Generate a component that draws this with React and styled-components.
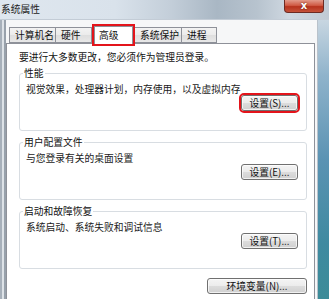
import React from "react";
import styled, { createGlobalStyle } from "styled-components";

const GlobalStyle = createGlobalStyle`
  html, body {
    margin: 0;
    padding: 0;
    background: #ffffff;
  }
  body {
    font-family: "Noto Sans CJK SC", "Noto Sans", sans-serif;
  }
`;

const tabs = [
  { label: "计算机名", width: 47 },
  { label: "硬件", width: 36 },
  { label: "高级", width: 39, active: true },
  { label: "系统保护", width: 47 },
  { label: "进程", width: 35 },
];

const groups = [
  { title: "性能", text: "视觉效果，处理器计划，内存使用，以及虚拟内存", button: "设置(S)...", marked: true },
  { title: "用户配置文件", text: "与您登录有关的桌面设置", button: "设置(E)..." },
  { title: "启动和故障恢复", text: "系统启动、系统失败和调试信息", button: "设置(T)..." },
];

function App() {
  return (
    <>
      <GlobalStyle />
      <Window>
        <TitleBar>
          <Title>系统属性</Title>
          <CloseButton>x</CloseButton>
        </TitleBar>
        <Frame>
          <LeftEdge />
          <Client>
            <TabRow>
              {tabs.map((t) => (
                <Tab key={t.label} $width={t.width} $active={t.active}>
                  {t.label}
                </Tab>
              ))}
            </TabRow>
            <Panel>
              <Intro>要进行大多数更改，您必须作为管理员登录。</Intro>
              {groups.map((g) => (
                <Group key={g.title}>
                  <Legend>{g.title}</Legend>
                  <GroupText>{g.text}</GroupText>
                  <ButtonRow>
                    <Button $marked={g.marked}>{g.button}</Button>
                  </ButtonRow>
                </Group>
              ))}
              <FooterRow>
                <Button $wide>环境变量(N)...</Button>
              </FooterRow>
            </Panel>
          </Client>
          <RightEdge />
        </Frame>
      </Window>
    </>
  );
}

export default App;

const Window = styled.div`
  width: 329px;
  height: 299px;
  overflow: hidden;
  display: flex;
  flex-direction: column;
  background: #f0f0f0;
  font-size: 9.75px;
  line-height: 12px;
  color: #111;
`;

const TitleBar = styled.div`
  height: 20px;
  flex: none;
  display: flex;
  align-items: flex-start;
  justify-content: space-between;
  box-sizing: border-box;
  border-bottom: 1px solid #c3ccd6;
  background: linear-gradient(
    to right,
    #dfe7ef 0%,
    #d9e2eb 35%,
    #c3ced9 52%,
    #a9b7c4 66%,
    #b7c3ce 78%,
    #cfd8e1 88%,
    #c0cad4 100%
  );
`;

const Title = styled.div`
  padding: 3px 0 0 1px;
  font-size: 9.75px;
  color: #1b1b1b;
`;

const CloseButton = styled.div`
  width: 40px;
  height: 13px;
  margin-right: 5px;
  box-sizing: border-box;
  border: 1px solid #6d2a22;
  border-top: none;
  border-radius: 0 0 4px 4px;
  background: linear-gradient(to bottom, #e29a8a 0%, #d05b45 45%, #b7331d 55%, #c5523a 100%);
  color: #fff;
  font-family: "DejaVu Sans", sans-serif;
  font-weight: bold;
  font-size: 10px;
  line-height: 11px;
  text-align: center;
  text-shadow: 0 0 2px #5a1a10;
`;

const Frame = styled.div`
  flex: 1;
  display: flex;
  min-height: 0;
`;

const LeftEdge = styled.div`
  width: 6px;
  flex: none;
  background: linear-gradient(
    to right,
    #a7b0ba 0px,
    #a7b0ba 2px,
    #dde2e7 2px,
    #dde2e7 4px,
    #98a1ab 4px,
    #98a1ab 6px
  );
`;

const RightEdge = styled.div`
  width: 11px;
  flex: none;
  border-left: 1px solid #b9c2cb;
  background: linear-gradient(to bottom, #c8d6e1 0%, #8fb3cb 20%, #5b93b3 50%, #3f8aa0 80%, #3c8c98 100%);
`;

const Client = styled.div`
  flex: 1;
  display: flex;
  flex-direction: column;
  padding: 4px 2px 0 0;
  background: #f6f7f8;
  min-width: 0;
`;

const TabRow = styled.div`
  display: flex;
  align-items: flex-end;
  height: 19px;
  padding-left: 3px;
  position: relative;
  z-index: 1;
`;

const Tab = styled.div`
  width: ${(p) => p.$width}px;
  height: ${(p) => (p.$active ? 18 : 16)}px;
  box-sizing: border-box;
  margin: ${(p) => (p.$active ? "0 2px -1px 2px" : "0")};
  padding: ${(p) => (p.$active ? "2px 0 0 4px" : "1px 0 0 5px")};
  border: 1px solid #8e9199;
  border-bottom: ${(p) => (p.$active ? "none" : "1px solid #8e9199")};
  border-left: ${(p) => (p.$active ? "1px solid #8e9199" : "none")};
  background: ${(p) =>
    p.$active ? "#ffffff" : "linear-gradient(to bottom, #f3f3f3 0%, #ebebeb 50%, #dedede 51%, #e8e8e8 100%)"};
  outline: ${(p) => (p.$active ? "2px solid #e3141b" : "none")};
  color: #111;
  white-space: nowrap;

  &:first-child {
    border-left: 1px solid #8e9199;
  }
`;

const Panel = styled.div`
  flex: 1;
  display: flex;
  flex-direction: column;
  gap: 5px;
  border: 1px solid #8e9199;
  border-bottom: none;
  background: #ffffff;
  padding: 7px 7px 0 12px;
`;

const Intro = styled.div`
  margin-bottom: -1px;
  white-space: nowrap;
`;

const Group = styled.fieldset`
  margin: 0;
  height: 64px;
  box-sizing: border-box;
  display: flex;
  flex-direction: column;
  padding: 4px 8px 5px 6px;
  border: 1px solid #d8dde2;
  border-radius: 3px;
  min-width: 0;
`;

const Legend = styled.legend`
  padding: 0 1px;
  margin-left: -3px;
  line-height: 12px;
  color: #111;
`;

const GroupText = styled.div`
  color: #1a1a1a;
  white-space: nowrap;
`;

const ButtonRow = styled.div`
  margin-top: auto;
  display: flex;
  justify-content: flex-end;
`;

const FooterRow = styled.div`
  display: flex;
  justify-content: flex-end;
  margin-top: 4px;
`;

const Button = styled.div`
  width: ${(p) => (p.$wide ? 100 : 57)}px;
  height: 16px;
  box-sizing: border-box;
  border: 1px solid #707070;
  border-radius: 3px;
  background: linear-gradient(to bottom, #f4f4f4 0%, #ececec 48%, #dcdcdc 52%, #d0d0d0 100%);
  box-shadow: inset 0 0 0 1px rgba(255, 255, 255, 0.7);
  outline: ${(p) => (p.$marked ? "2px solid #e3141b" : "none")};
  display: flex;
  align-items: center;
  justify-content: center;
  font-size: 9.75px;
  line-height: 12px;
  color: #111;
  white-space: nowrap;
`;
